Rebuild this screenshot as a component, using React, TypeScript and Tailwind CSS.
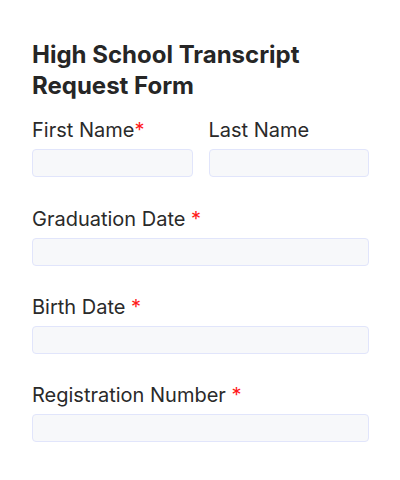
export default function App() {
  const inputCls =
    'block w-full h-[28px] rounded-[4px] border border-[#e1e5fb] bg-[#f7f8fa] outline-none';
  const labelCls = 'block text-[20px] leading-[28px] text-[#2a2a2a] mb-[5px]';
  const star = <span className="text-[#ff1a1a]">*</span>;

  return (
    <div
      className="min-h-[480px] w-[400px] bg-white pl-[32px] pr-[31px] pt-[39px]"
      style={{ fontFamily: 'Inter, "Noto Sans", sans-serif' }}
    >
      <h1 className="text-[24px] leading-[31px] font-bold text-[#262626] mb-[15px]">
        High School Transcript
        <br />
        Request Form
      </h1>

      <div className="grid grid-cols-2 gap-x-[16px]">
        <div>
          <label className={labelCls}>First Name{star}</label>
          <input className={inputCls} />
        </div>
        <div>
          <label className={labelCls}>Last Name</label>
          <input className={inputCls} />
        </div>
      </div>

      <div className="mt-[28px]">
        <label className={labelCls}>Graduation Date {star}</label>
        <input className={inputCls} />
      </div>

      <div className="mt-[27px]">
        <label className={labelCls}>Birth Date {star}</label>
        <input className={inputCls} />
      </div>

      <div className="mt-[27px]">
        <label className={labelCls}>Registration Number {star}</label>
        <input className={inputCls} />
      </div>
    </div>
  );
}
